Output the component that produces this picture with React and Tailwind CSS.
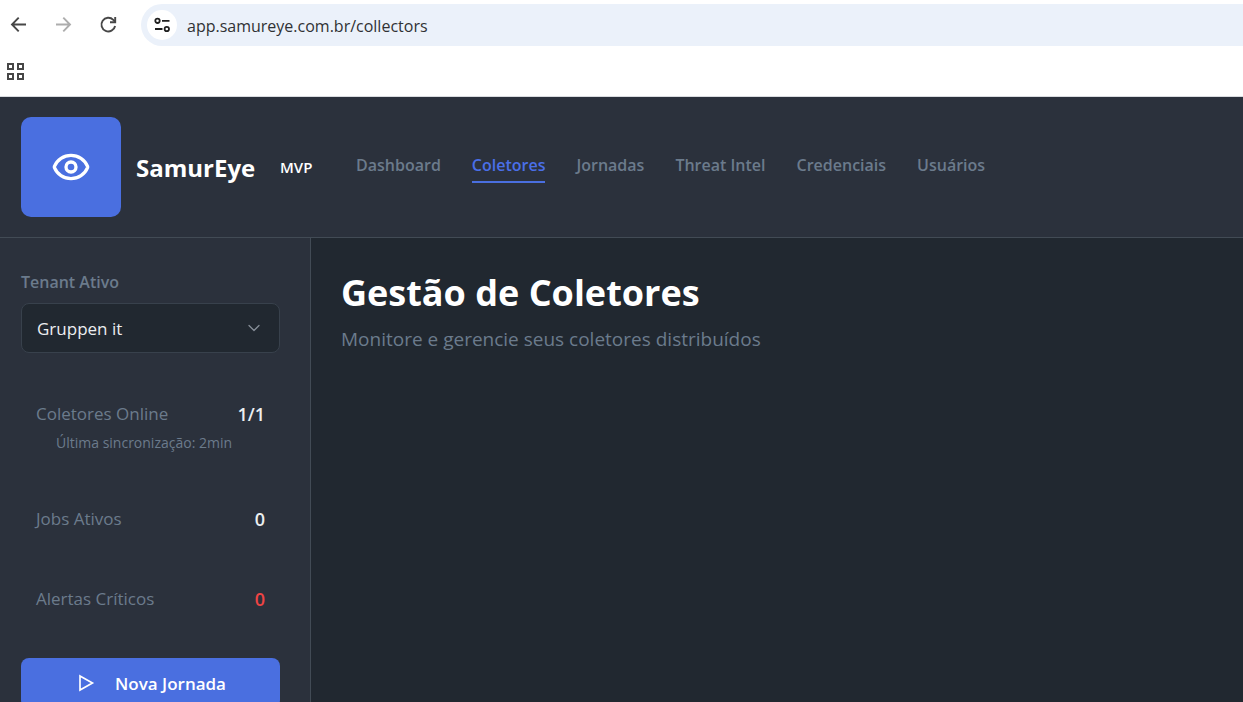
import { Eye, ChevronDown } from 'lucide-react';

const links = ['Dashboard', 'Coletores', 'Jornadas', 'Threat Intel', 'Credenciais', 'Usuários'];

function BrowserBar() {
  return (
    <div className="border-b border-[#d9dbdf] bg-white text-[#474747]">
      <div className="flex h-[50px] items-center pl-2">
        <button aria-label="Voltar" className="mr-6 shrink-0">
          <svg className="size-5" viewBox="0 0 20 20" fill="none" stroke="currentColor" strokeWidth="1.9">
            <path d="M18 9.500H4.200M10.700 2.700 4 9.500l6.700 6.800" />
          </svg>
        </button>
        <button aria-label="Avançar" className="mr-6 shrink-0 text-[#adadad]">
          <svg className="size-5" viewBox="0 0 20 20" fill="none" stroke="currentColor" strokeWidth="1.9">
            <path d="M4 9.500H17.800M11.300 2.700 18 9.500l-6.700 6.800" />
          </svg>
        </button>
        <button aria-label="Recarregar" className="mr-[21px] shrink-0">
          <svg className="size-6" viewBox="0 0 24 24" fill="none" stroke="currentColor" strokeWidth="1.9">
            <path d="M19.100 13a6.900 6.900 0 1 1-1.800-6.200L19 8.500" />
            <path d="M19.200 4V9.200h-5.200" />
          </svg>
        </button>
        <div className="flex h-[42px] min-w-0 grow items-center gap-2 rounded-l-full bg-[#ebf1fa] pl-1.5">
          <button aria-label="Informações do site" className="grid size-[30px] shrink-0 place-items-center rounded-full bg-white text-[#1f1f1f]">
            <svg className="size-[18px]" viewBox="0 0 18 18" fill="none" stroke="currentColor" strokeWidth="1.8">
              <circle cx="4.500" cy="4.800" r="2.200" />
              <path d="M9 4.800h7.500M2 13h7.500" />
              <circle cx="13.800" cy="13" r="2.200" />
            </svg>
          </button>
          <input
            aria-label="Endereço"
            defaultValue="app.samureye.com.br/collectors"
            className="min-w-0 grow bg-transparent pt-0.5 pl-0.5 text-[16px] text-[#303134] outline-none"
          />
        </div>
      </div>
      <div className="flex h-[46px] items-center pb-1 pl-1.5">
        <button aria-label="Aplicativos">
          <svg className="size-[19px]" viewBox="0 0 19 19" fill="none" stroke="currentColor" strokeWidth="2">
            <path d="M2 2h5v5H2zM12 2h5v5h-5zM2 12h5v5H2zM12 12h5v5h-5z" />
          </svg>
        </button>
      </div>
    </div>
  );
}

function Stat({ label, value, note, alert }) {
  return (
    <div className="px-[15px] py-[25px]">
      <div className="flex h-[30px] items-center justify-between">
        <span className="text-[17px] text-[#6b7b8c]">{label}</span>
        <span className={alert ? 'text-[18px] font-semibold text-[#ef4444]' : 'text-[18px] font-semibold text-[#eceef0]'}>{value}</span>
      </div>
      {note && <p className="pt-0.5 pl-5 text-[14px] leading-[23px] text-[#6b7b8c]">{note}</p>}
    </div>
  );
}

export default function App() {
  return (
    <div className="flex h-screen flex-col overflow-hidden bg-[#212830] font-['Open_Sans',sans-serif]">
      <BrowserBar />
      <header className="flex shrink-0 items-center border-b border-[#424b55] bg-[#2b313c] px-[21px] py-5">
        <div className="mr-[15px] grid size-[100px] shrink-0 place-items-center rounded-[10px] bg-[#4a6fe0] text-white">
          <Eye size={40} strokeWidth={2} />
        </div>
        <span className="w-[144px] shrink-0 pt-0.5 text-[24px] font-bold text-white">SamurEye</span>
        <span className="w-[76px] shrink-0 text-[15px] font-semibold text-white">MVP</span>
        <nav className="flex items-center gap-[31px]">
          {links.map((name) => (
            <a
              key={name}
              href="#"
              aria-current={name === 'Coletores' ? 'page' : undefined}
              className={
                name === 'Coletores'
                  ? 'border-b-2 border-[#4a6fe0] pb-0.5 text-[16px] leading-7 font-semibold whitespace-nowrap text-[#4a6fe8]'
                  : 'border-b-2 border-transparent pb-0.5 text-[16px] leading-7 font-semibold whitespace-nowrap text-[#6b7b8c]'
              }
            >
              {name}
            </a>
          ))}
        </nav>
      </header>
      <div className="flex min-h-0 grow">
        <aside className="w-[311px] shrink-0 overflow-hidden border-r border-[#424b55] bg-[#2b313c] pt-8 pr-[30px] pl-[21px]">
          <label htmlFor="tenant" className="block text-[16px] leading-[25px] font-semibold text-[#6b7b8c]">
            Tenant Ativo
          </label>
          <div className="relative mt-2 mb-[21px]">
            <select
              id="tenant"
              className="h-[50px] w-full appearance-none rounded-lg border border-[#38414c] bg-[#212830] px-[15px] pt-0.5 text-[17px] text-[#eceef0]"
            >
              <option>Gruppen it</option>
            </select>
            <ChevronDown size={20} strokeWidth={1.5} className="pointer-events-none absolute top-[15px] right-4 text-[#868e98]" />
          </div>
          <Stat label="Coletores Online" value="1/1" note="Última sincronização: 2min" />
          <Stat label="Jobs Ativos" value="0" />
          <Stat label="Alertas Críticos" value="0" alert />
          <button className="mt-[19px] flex h-[50px] w-full items-center justify-center gap-5 rounded-lg bg-[#4a6fe0] text-[17px] font-semibold text-white">
            <svg className="size-5" viewBox="0 0 24 24" fill="none" stroke="currentColor" strokeWidth="2">
              <path d="M6 3.500 21 12 6 20.500z" />
            </svg>
            <span className="pt-0.5">Nova Jornada</span>
          </button>
        </aside>
        <main className="min-w-0 grow px-[30px] pt-[30px]">
          <h1 className="text-[36px] leading-[50px] font-bold text-white">Gestão de Coletores</h1>
          <p className="mt-1 text-[19px] leading-[34px] text-[#6b7b8c]">Monitore e gerencie seus coletores distribuídos</p>
        </main>
      </div>
    </div>
  );
}
